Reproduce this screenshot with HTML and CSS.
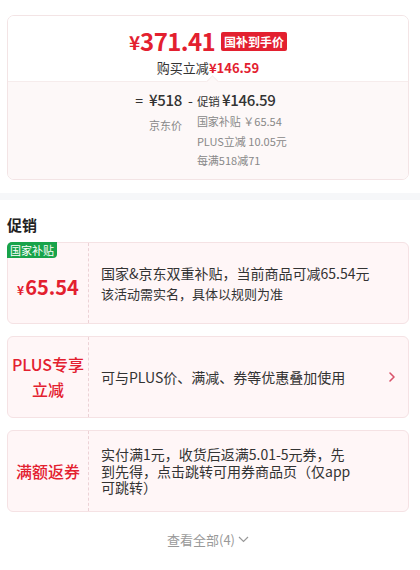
FILE: index.html
```html
<!DOCTYPE html>
<html lang="zh-CN">
<head>
    <meta charset="UTF-8">
    <meta name="viewport" content="width=device-width, initial-scale=1.0">
    <title>促销</title>
    <link rel="stylesheet" href="styles.css">
</head>
<body>
    <div class="price-card">
        <div class="price-top">
            <div class="price-line">
                <span class="yen">¥</span><span class="amount">371.41</span>
                <span class="tag">国补到手价</span>
            </div>
            <div class="saving">购买立减<b>¥146.59</b></div>
        </div>
        <div class="price-bottom">
            <div class="calc">
                <span class="op">=</span>
                <div class="term">
                    <div class="val">¥518</div>
                    <div class="lbl jd">京东价</div>
                </div>
                <span class="op minus">-</span>
                <div class="term">
                    <div class="val"><small>促销</small>¥146.59</div>
                    <div class="lbl first">国家补贴 ￥65.54</div>
                    <div class="lbl">PLUS立减 10.05元</div>
                    <div class="lbl">每满518减71</div>
                </div>
            </div>
        </div>
    </div>

    <div class="band"></div>

    <div class="promo">
        <h3>促销</h3>

        <div class="coupon">
            <span class="badge">国家补贴</span>
            <div class="coupon-left">
                <span class="money"><small>¥</small>65.54</span>
            </div>
            <div class="coupon-right">
                <p class="main wide">国家&amp;京东双重补贴，当前商品可减65.54元</p>
                <p class="sub">该活动需实名，具体以规则为准</p>
            </div>
        </div>

        <div class="coupon">
            <div class="coupon-left">
                <span class="name">PLUS专享<br>立减</span>
            </div>
            <div class="coupon-right">
                <p class="main">可与PLUS价、满减、券等优惠叠加使用</p>
            </div>
            <span class="arrow">
                <svg width="8" height="12" viewBox="0 0 8 12"><path d="M2 2l4 4-4 4" fill="none" stroke="#d9536a" stroke-width="1.6" stroke-linecap="round" stroke-linejoin="round"/></svg>
            </span>
        </div>

        <div class="coupon">
            <div class="coupon-left">
                <span class="name">满额返券</span>
            </div>
            <div class="coupon-right">
                <p class="main narrow">实付满1元，收货后返满5.01-5元券，先到先得，点击跳转可用券商品页（仅app可跳转）</p>
            </div>
        </div>

        <div class="more">查看全部(4)
            <svg width="11" height="7" viewBox="0 0 11 7"><path d="M1 1l4.5 4.5L10 1" fill="none" stroke="#999" stroke-width="1.2"/></svg>
        </div>
    </div>
</body>
</html>
```

FILE: styles.css
```css
body {
    margin: 0;
    background: #fff;
    font-family: "Noto Sans CJK SC", "Noto Sans", sans-serif;
    color: #333;
}
.price-card {
    margin: 15px 0 0 7px;
    width: 400px;
    border: 1px solid #f3e4e5;
    border-radius: 7px;
    overflow: hidden;
}
.price-top {
    height: 65px;
    text-align: center;
    background: #fff;
}
.price-line {
    display: flex;
    justify-content: center;
    align-items: center;
    padding-top: 7px;
    height: 34px;
    color: #e3202f;
    font-weight: bold;
}
.yen {
    font-size: 19px;
    margin-top: 3px;
}
.amount {
    font-size: 24px;
    letter-spacing: -0.6px;
}
.tag {
    margin-left: 6px;
    background: #e3202f;
    color: #fff;
    font-size: 12px;
    line-height: 19px;
    padding: 0 3px;
    border-radius: 2px;
    margin-top: 2px;
}
.saving {
    font-size: 13px;
    line-height: 18px;
    margin-top: 2px;
}
.saving b {
    color: #e3202f;
}
.price-bottom {
    position: relative;
    background: #fdf8f8;
    border-top: 1px solid #f6ecec;
    height: 97px;
}
.price-bottom::before {
    content: "";
    position: absolute;
    left: 200px;
    top: -5px;
    width: 8px;
    height: 8px;
    background: #fdf8f8;
    border-top: 1px solid #f6ecec;
    border-left: 1px solid #f6ecec;
    transform: rotate(45deg);
}
.calc {
    display: flex;
    justify-content: center;
    align-items: flex-start;
    padding-top: 6px;
    margin-left: 6px;
}
.op {
    font-size: 14px;
    line-height: 24px;
    color: #333;
    margin-right: 6px;
}
.op.minus {
    margin: 0 4px 0 6px;
}
.val {
    font-size: 15px;
    line-height: 24px;
    color: #333;
    font-weight: 500;
    letter-spacing: -0.3px;
}
.val small {
    font-size: 11.5px;
    font-weight: normal;
    margin-right: 2px;
    letter-spacing: 0;
}
.lbl {
    font-size: 11px;
    line-height: 19.5px;
    color: #888;
}
.lbl.jd {
    margin-top: 4px;
}
.lbl.first {
    margin-top: -1px;
}
.band {
    height: 7px;
    margin-top: 13px;
    background: #f6f7f9;
}
.promo {
    padding: 0 11px 0 7px;
}
.promo h3 {
    margin: 0;
    padding: 13px 0 6px;
    font-size: 15px;
    line-height: 23px;
    color: #222;
}
.coupon {
    position: relative;
    display: flex;
    height: 80px;
    margin-bottom: 12px;
    background: #fff6f7;
    border: 1px solid #f5e2e4;
    border-radius: 6px;
}
.badge {
    position: absolute;
    left: -1px;
    top: -1px;
    background: #18a34a;
    color: #fff;
    font-size: 11px;
    line-height: 16px;
    padding: 0 3px;
    border-radius: 5px 0 4px 0;
}
.coupon-left {
    width: 80px;
    flex-shrink: 0;
    display: flex;
    align-items: center;
    justify-content: center;
    border-right: 1px dashed #ecd2d6;
    text-align: center;
    color: #e3202f;
}
.money {
    font-size: 20px;
    font-weight: bold;
    padding-top: 6px;
}
.money small {
    font-size: 12px;
    margin-right: 1px;
}
.name {
    font-size: 16px;
    line-height: 25px;
    font-weight: 500;
}
.coupon-right {
    flex: 1;
    display: flex;
    flex-direction: column;
    justify-content: center;
    padding-left: 12px;
}
.coupon-right p {
    margin: 0;
}
.main {
    font-size: 14px;
    line-height: 18px;
    color: #333;
}
.main.wide {
    line-height: 20.5px;
}
.main.narrow {
    max-width: 256px;
    line-height: 16.5px;
}
.sub {
    font-size: 13px;
    line-height: 19px;
    color: #333;
}
.arrow {
    display: flex;
    align-items: center;
    padding-right: 12px;
}
.more {
    display: flex;
    justify-content: center;
    align-items: center;
    gap: 3px;
    padding-top: 6px;
    font-size: 13px;
    color: #999;
}
```
